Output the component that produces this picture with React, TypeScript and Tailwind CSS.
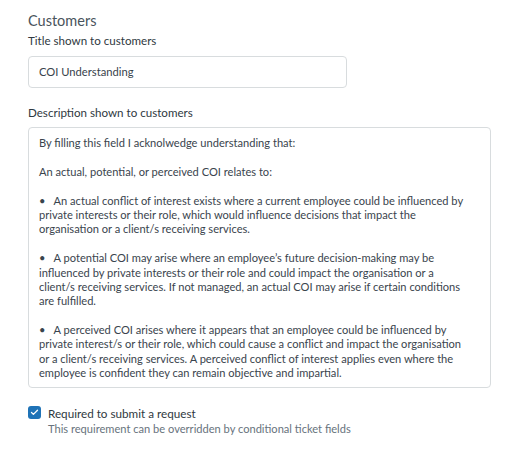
import { Check } from "lucide-react";

const lines = [
  "By filling this field I acknolwedge understanding that:",
  "",
  "An actual, potential, or perceived COI relates to:",
  "",
  "\u2022   An actual conflict of interest exists where a current employee could be influenced by",
  "private interests or their role, which would influence decisions that impact the",
  "organisation or a client/s receiving services.",
  "",
  "\u2022   A potential COI may arise where an employee\u2019s future decision-making may be",
  "influenced by private interests or their role and could impact the organisation or a",
  "client/s receiving services. If not managed, an actual COI may arise if certain conditions",
  "are fulfilled.",
  "",
  "\u2022   A perceived COI arises where it appears that an employee could be influenced by",
  "private interest/s or their role, which could cause a conflict and impact the organisation",
  "or a client/s receiving services. A perceived conflict of interest applies even where the",
  "employee is confident they can remain objective and impartial.",
];

export default function App() {
  return (
    <div className="min-h-[460px] bg-white pl-[28px] pt-[12px] font-['Lato',sans-serif] text-[#2f3941]">
      <h2 className="text-[14.5px] leading-[18px] text-[#49545c]">Customers</h2>

      <label className="mt-[3px] block text-[11.6px] leading-[16px]">Title shown to customers</label>
      <div className="mt-[7px] flex h-[32px] w-[319px] items-center rounded-[4px] border border-[#d8dcde] px-[10px] text-[11.2px] text-[#38434c]">
        COI Understanding
      </div>

      <label className="mt-[17px] block text-[11.6px] leading-[16px]">Description shown to customers</label>
      <div className="mt-[6px] w-[463px] rounded-[4px] border border-[#d8dcde] px-[10px] pb-[6px] pt-[8px] text-[11.1px] leading-[14.4px] text-[#3a444d]">
        {lines.map((l, i) => (
          <div key={i} className="h-[14.4px] whitespace-pre">
            {l}
          </div>
        ))}
      </div>

      <div className="mt-[17px] flex gap-[7px]">
        <div className="mt-[1px] flex h-[13px] w-[13px] items-center justify-center rounded-[3px] bg-[#1f73b7]">
          <Check size={9} strokeWidth={3.5} color="white" />
        </div>
        <div>
          <div className="text-[11.7px] leading-[16px]">Required to submit a request</div>
          <div className="text-[11.1px] leading-[16px] text-[#68737d]">
            This requirement can be overridden by conditional ticket fields
          </div>
        </div>
      </div>
    </div>
  );
}
